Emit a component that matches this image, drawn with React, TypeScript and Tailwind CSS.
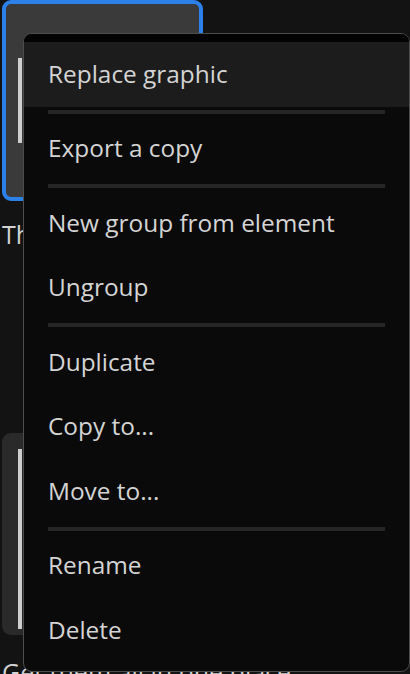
import { Fragment } from "react";

type MenuEntry = { label: string; active?: boolean } | "sep";

const entries: MenuEntry[] = [
  { label: "Replace graphic", active: true },
  "sep",
  { label: "Export a copy" },
  "sep",
  { label: "New group from element" },
  { label: "Ungroup" },
  "sep",
  { label: "Duplicate" },
  { label: "Copy to..." },
  { label: "Move to..." },
  "sep",
  { label: "Rename" },
  { label: "Delete" },
];

const font = { fontFamily: '"Open Sans", "Noto Sans", sans-serif' };

export default function App() {
  return (
    <div
      className="relative h-[674px] w-[410px] overflow-hidden bg-[#131313] text-[#d4d4d4]"
      style={font}
    >
      {/* Page behind the menu */}
      <div className="flex flex-col pl-[2px]">
        <div className="h-[201px] w-[201px] rounded-[9px] border-[4px] border-[#2b80ea] bg-[#3a3a3a] pt-[54px] pl-[12px]">
          <div className="h-[85px] w-[4px] bg-[#cfcfcf]" />
        </div>
        <p className="mt-[18px] text-[25px] leading-[30px] text-[#d2d2d2]">Th</p>
        <div className="mt-[184px] h-[202px] w-[60px] rounded-[9px] bg-[#2a2a2a] pt-[16px] pl-[16px]">
          <div className="h-[180px] w-[4px] bg-[#cfcfcf]" />
        </div>
        <p className="mt-[22px] text-[25px] leading-[30px] text-[#d2d2d2]">Get them all in one place</p>
      </div>

      {/* Context menu */}
      <div className="absolute left-[23px] top-[33px] w-[387px] rounded-[9px] border border-[#4d4d4d] bg-[#0a0a0a] pb-[8px]">
        <div className="h-[8px] rounded-t-[8px] bg-[#030303]" />
        {entries.map((e, i) =>
          e === "sep" ? (
            <div key={i} className="mx-[24px] my-[3px] h-[4px] bg-[#262626]" />
          ) : (
            <Fragment key={i}>
              <div
                className={`flex h-[64.5px] items-center px-[24px] text-[24.4px] ${
                  e.active ? "bg-[#1c1c1c]" : ""
                }`}
              >
                {e.label}
              </div>
            </Fragment>
          )
        )}
      </div>
    </div>
  );
}
